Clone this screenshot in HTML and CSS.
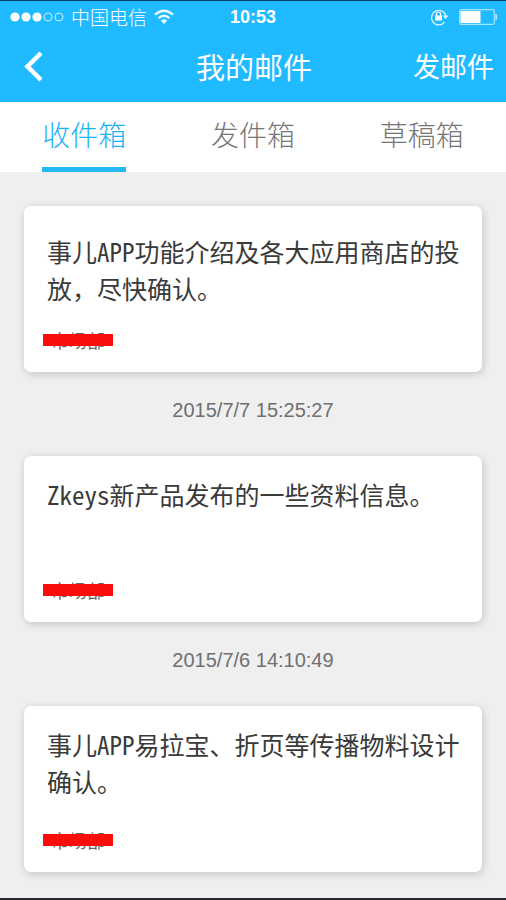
FILE: index.html
```html
<!DOCTYPE html>
<html lang="zh-CN">
<head>
<meta charset="utf-8">
<meta name="viewport" content="width=device-width, initial-scale=1">
<title>我的邮件</title>
<link rel="stylesheet" href="styles.css">
</head>
<body>
<div class="screen">
  <header class="top">
    <div class="status">
      <div class="status-left">
        <svg class="signal" width="54" height="12" viewBox="0 0 54 12" aria-hidden="true">
          <g fill="#fff"><circle cx="5" cy="6" r="4.6"/><circle cx="16" cy="6" r="4.6"/><circle cx="27" cy="6" r="4.6"/></g>
          <g fill="none" stroke="#c5efff" stroke-width="1"><circle cx="38" cy="6" r="4"/><circle cx="49" cy="6" r="4"/></g>
        </svg>
        <span class="carrier">中国电信</span>
        <svg class="wifi" width="20" height="16" viewBox="0 0 20 16" aria-hidden="true">
          <g fill="none" stroke="#e8f9ff" stroke-width="2.4"><path d="M1 5.6Q10-2.2 19 5.6"/><path d="M4.5 9.2Q10 4.4 15.500 9.200"/></g>
          <path d="M6.800 11.600Q10 9 13.200 11.600L10 15Z" fill="#e8f9ff"/>
        </svg>
      </div>
      <span class="clock">10:53</span>
      <div class="status-right">
        <svg width="20" height="18" viewBox="0 0 20 18" aria-hidden="true">
          <path d="M14.500 14.200A7.300 7.300 0 1 1 16 8.500" fill="none" stroke="#dff6ff" stroke-width="1.300"/>
          <path d="M12.500 7.500H18.500L15.500 11Z" fill="#dff6ff"/>
          <rect x="5" y="7.500" width="7" height="5" fill="#fff"/>
          <path d="M6.500 8V6a2 2 0 0 1 4 0V8" fill="none" stroke="#fff" stroke-width="1.200"/>
        </svg>
        <svg width="39" height="16" viewBox="0 0 39 16" aria-hidden="true">
          <rect x=".7" y=".7" width="34.600" height="14.600" rx="1.500" fill="none" stroke="#a5e6fb" stroke-width="1.200"/>
          <rect x="1.500" y="2" width="20" height="12" fill="#fff"/>
          <path d="M36.500 5h1q1 3 0 6h-1z" fill="#d6f4ff"/>
        </svg>
      </div>
    </div>
    <div class="nav">
      <button class="back" type="button" aria-label="返回">
        <svg width="20" height="32" viewBox="0 0 20 32" aria-hidden="true"><path d="M19 3L5.500 16.500L19 30" fill="none" stroke="#fff" stroke-width="4.500"/></svg>
      </button>
      <h1 class="title">我的邮件</h1>
      <button class="compose" type="button">发邮件</button>
    </div>
  </header>

  <nav class="tabs">
    <a class="tab tab-active" href="#inbox" aria-current="page">收件箱</a>
    <a class="tab" href="#sent">发件箱</a>
    <a class="tab" href="#drafts">草稿箱</a>
  </nav>

  <main class="list" id="inbox">
    <article class="card card-low">
      <p class="subject">事儿APP功能介绍及各大应用商店的投放，尽快确认。</p>
      <span class="sender">市场部</span>
    </article>
    <time class="date">2015/7/7 15:25:27</time>
    <article class="card">
      <p class="subject">Zkeys新产品发布的一些资料信息。</p>
      <span class="sender">市场部</span>
    </article>
    <time class="date">2015/7/6 14:10:49</time>
    <article class="card">
      <p class="subject">事儿APP易拉宝、折页等传播物料设计确认。</p>
      <span class="sender">市场部</span>
    </article>
  </main>
</div>
</body>
</html>
```

FILE: styles.css
```css
* {
  box-sizing: border-box;
}

body {
  margin: 0;
  background: #efeff0;
  color: #3a3a3a;
  font-family: "Noto Sans CJK SC", sans-serif;
}

button {
  padding: 0;
  border: 0;
  background: none;
  color: inherit;
  font: inherit;
  cursor: pointer;
}

svg {
  display: block;
}

.screen {
  min-height: 100vh;
  border-top: 1px solid #12406a;
  border-bottom: 2px solid #2c2c30;
}

.top {
  background: #1fbaff;
  color: #fff;
}

.status,
.nav {
  display: grid;
  grid-template-columns: 1fr auto 1fr;
  align-items: center;
}

.status {
  height: 32px;
  padding: 0 8px 0 10px;
}

.status-left,
.status-right {
  display: flex;
  align-items: center;
}

.status-left {
  gap: 7px;
}

.status-right {
  justify-content: flex-end;
  gap: 9px;
}

.carrier {
  font-size: 19px;
  font-weight: 300;
  line-height: 24px;
}

.clock {
  padding-right: 2px;
  font-family: "Liberation Sans", sans-serif;
  font-size: 18px;
  font-weight: 700;
}

.nav {
  height: 69px;
  padding: 0 12px 3px 22px;
}

.back {
  justify-self: start;
}

.title {
  margin: 0;
  padding-right: 8px;
  font-size: 29px;
  font-weight: 400;
  line-height: 36px;
}

.compose {
  justify-self: end;
  font-size: 27px;
  line-height: 36px;
}

.tabs {
  display: grid;
  grid-template-columns: repeat(3, 1fr);
  justify-items: center;
  height: 70px;
  background: #fff;
}

.tab {
  border-bottom: 5px solid transparent;
  color: #777;
  font-size: 28px;
  font-weight: 300;
  line-height: 65px;
  text-decoration: none;
}

.tab-active {
  border-color: #26b8f5;
  color: #1cb2f5;
}

.list {
  display: flex;
  flex-direction: column;
  padding: 34px 24px 26px;
}

.card {
  display: flex;
  flex-direction: column;
  justify-content: space-between;
  align-items: flex-start;
  min-height: 166px;
  padding: 20px 16px 20px 23px;
  border-radius: 7px;
  background: #fff;
  box-shadow: 1px 2px 8px rgba(0, 0, 0, 0.18);
}

.card-low {
  padding-top: 27px;
}

.subject {
  margin: 0;
  font-family: "Noto Sans Mono CJK SC", "Noto Sans CJK SC", monospace;
  font-size: 25px;
  line-height: 37px;
}

.sender {
  position: relative;
  padding-left: 4px;
  color: #666;
  font-size: 18px;
  line-height: 24px;
}

.sender::after {
  content: "";
  position: absolute;
  top: 6px;
  left: -4px;
  width: 70px;
  height: 12px;
  background: #f80f0c;
}

.date {
  color: #707070;
  font-family: "Liberation Sans", sans-serif;
  font-size: 20px;
  line-height: 24px;
  margin: 26px 0 34px;
  text-align: center;
}
```
